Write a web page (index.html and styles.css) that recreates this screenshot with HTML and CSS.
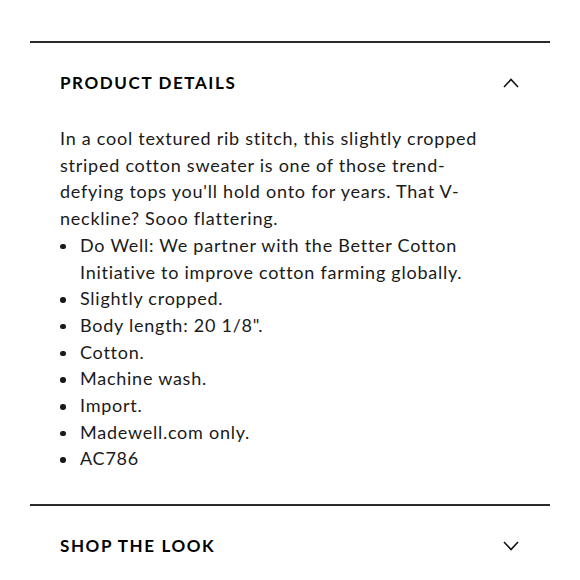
FILE: index.html
```html
<!DOCTYPE html>
<html lang="en">
<head>
<meta charset="utf-8">
<title>Product Details</title>
<link rel="stylesheet" href="styles.css">
</head>
<body>
<div class="accordion">
  <section class="panel">
    <div class="panel-head">
      <h2 class="panel-title">PRODUCT DETAILS</h2>
      <svg class="chev" width="16" height="10" viewBox="0 0 16 10"><path d="M1 9 L8 1.5 L15 9" fill="none" stroke="#111" stroke-width="1.6"/></svg>
    </div>
    <div class="panel-body">
      <p class="desc">In a cool textured rib stitch, this slightly cropped striped cotton sweater is one of those trend-defying tops you'll hold onto for years. That V-neckline? Sooo flattering.</p>
      <ul class="bullets">
        <li>Do Well: We partner with the Better Cotton Initiative to improve cotton farming globally.</li>
        <li>Slightly cropped.</li>
        <li>Body length: 20 1/8".</li>
        <li>Cotton.</li>
        <li>Machine wash.</li>
        <li>Import.</li>
        <li>Madewell.com only.</li>
        <li>AC786</li>
      </ul>
    </div>
  </section>
  <section class="panel">
    <div class="panel-head">
      <h2 class="panel-title">SHOP THE LOOK</h2>
      <svg class="chev" width="16" height="10" viewBox="0 0 16 10"><path d="M1 1 L8 8.5 L15 1" fill="none" stroke="#111" stroke-width="1.6"/></svg>
    </div>
  </section>
</div>
</body>
</html>
```
FILE: styles.css
```css
html, body {
  margin: 0;
  padding: 0;
  background: #fff;
}
body {
  font-family: Lato, "Open Sans", sans-serif;
  color: #1a1a1a;
}
.accordion {
  padding: 41px 30px 0;
}
.panel {
  border-top: 2px solid #2a2a2a;
}
.panel-head {
  display: flex;
  align-items: center;
  justify-content: space-between;
  padding: 28px 31px 29px 30px;
  height: 24px;
}
.panel-title {
  margin: 0;
  font-size: 17px;
  font-weight: 700;
  letter-spacing: 1.6px;
  line-height: 24px;
  color: #000;
}
.chev {
  display: block;
}
.panel-body {
  padding: 1px 30px 32px;
  width: 435px;
  font-size: 18px;
  line-height: 26.7px;
  letter-spacing: 0.75px;
}
.desc {
  margin: 0;
}
.bullets {
  list-style: none;
  margin: 0;
  padding: 0;
}
.bullets li {
  display: grid;
  grid-template-columns: 20px 1fr;
}
.bullets li::before {
  content: "";
  width: 5.5px;
  height: 5.5px;
  border-radius: 50%;
  background: #1a1a1a;
  margin-top: 12px;
}
```
